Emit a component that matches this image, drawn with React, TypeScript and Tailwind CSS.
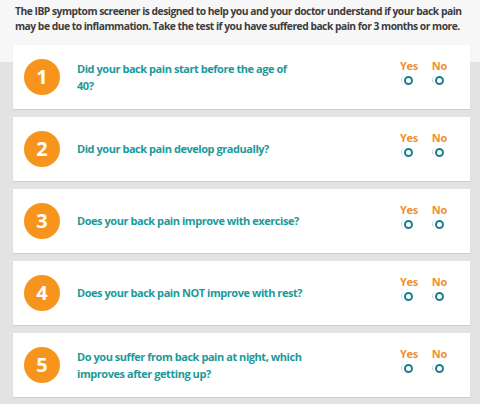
const questions = [
  { n: 1, text: 'Did your back pain start before the age of 40?' },
  { n: 2, text: 'Did your back pain develop gradually?' },
  { n: 3, text: 'Does your back pain improve with exercise?' },
  { n: 4, text: 'Does your back pain NOT improve with rest?' },
  { n: 5, text: 'Do you suffer from back pain at night, which improves after getting up?' },
]

const Radio = () => (
  <span className="relative flex h-[9px] w-[9px] items-center justify-center">
    <span className="absolute -left-[3px] h-[9px] w-[9px] rounded-full border-l border-[#c4dde0]" />
    <span className="h-[9px] w-[9px] rounded-full border-[2.5px] border-[#1d7f8b] bg-white" />
  </span>
)

export default function App() {
  return (
    <div className="min-h-[404px] w-[480px] bg-[linear-gradient(#f7f7f7_62px,#e3e3e3_62px)] font-['Open_Sans',sans-serif]">
      <p className="px-[15px] pt-[4px] text-[10.3px] font-bold leading-[14.5px] tracking-[-0.5px] text-[#3d3d3d]">
        The IBP symptom screener is designed to help you and your doctor understand if your back pain may be due to
        inflammation. Take the test if you have suffered back pain for 3 months or more.
      </p>
      <div className="mt-[12px] flex flex-col gap-[8px] pl-[13px] pr-[10px]">
        {questions.map((q) => (
          <div
            key={q.n}
            className="flex h-[64px] items-center bg-white pl-[11px] pr-[23px] shadow-[0_1px_1px_rgba(0,0,0,0.08)]"
          >
            <div className="flex h-[36px] w-[36px] shrink-0 items-center justify-center rounded-full bg-[#f7941e] text-[20px] font-bold text-white">
              {q.n}
            </div>
            <div className="ml-[17px] w-[226px] text-[11px] font-bold leading-[17.5px] tracking-[-0.45px] text-[#1b9a9a]">
              {q.text}
            </div>
            <div className="ml-auto flex gap-[14px] pb-[10px]">
              <div className="flex flex-col items-center gap-[4px]">
                <span className="text-[11px] font-bold leading-[13px] tracking-[-0.3px] text-[#f0922e]">Yes</span>
                <Radio />
              </div>
              <div className="flex flex-col items-center gap-[4px]">
                <span className="text-[11px] font-bold leading-[13px] tracking-[-0.3px] text-[#f0922e]">No</span>
                <Radio />
              </div>
            </div>
          </div>
        ))}
      </div>
    </div>
  )
}
